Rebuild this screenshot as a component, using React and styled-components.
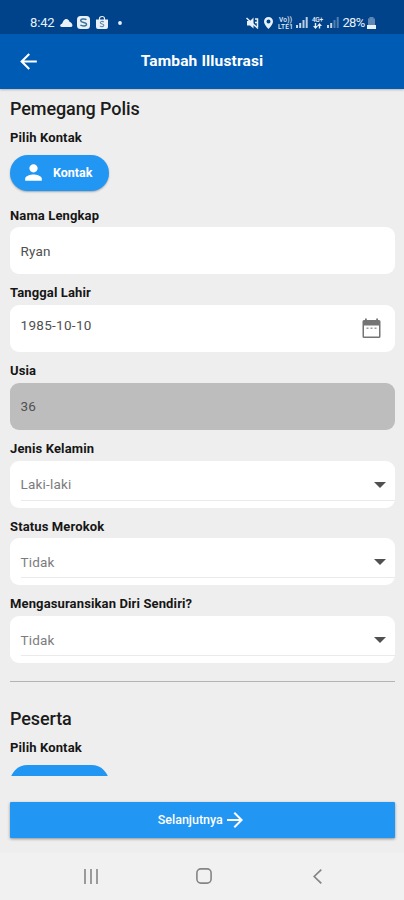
import React from "react";
import styled, { createGlobalStyle } from "styled-components";
import { MdArrowBack, MdArrowForward, MdPerson } from "react-icons/md";

const GlobalStyle = createGlobalStyle`
  * {
    box-sizing: border-box;
  }

  body {
    margin: 0;
    background: #eeeeee;
    font-family: Roboto, "Liberation Sans", sans-serif;
  }
`;

const Screen = styled.div`
  display: flex;
  flex-direction: column;
  width: 404px;
  height: 900px;
  overflow: hidden;
  background: #eeeeee;
`;

const StatusBar = styled.div`
  display: flex;
  flex: none;
  justify-content: space-between;
  align-items: center;
  height: 34px;
  padding: 11px 28px 0 30px;
  background: #00438a;
  color: #e8f0f8;
`;

const StatusGroup = styled.div`
  display: flex;
  align-items: center;
  height: 16px;
`;

const StatusText = styled.span`
  margin-left: ${({ $gap }) => $gap || 0}px;
  font-size: 13px;
  line-height: 16px;
  letter-spacing: ${({ $spacing }) => $spacing || 0}px;
`;

const StatusIcon = styled.svg`
  display: block;
  flex: none;
  margin-left: ${({ $gap }) => $gap || 0}px;
  overflow: visible;
`;

const AppBar = styled.header`
  position: relative;
  z-index: 1;
  display: grid;
  flex: none;
  grid-template-columns: 56px 1fr 56px;
  align-items: center;
  height: 54.5px;
  background: #005bb5;
  box-shadow: 0 1px 2px rgba(0, 0, 0, 0.25);
  color: #ffffff;
`;

const BackButton = styled.button`
  display: flex;
  justify-content: center;
  padding: 0;
  border: 0;
  background: none;
  color: inherit;
  font-size: 25px;
`;

const Title = styled.h1`
  margin: 0;
  font-size: 15.5px;
  font-weight: 700;
  line-height: 20px;
  letter-spacing: 0.15px;
  text-align: center;
  white-space: nowrap;
`;

const Content = styled.main`
  flex: none;
  height: 687.5px;
  padding: 9.5px 9.5px 0 10px;
  overflow: hidden;
`;

const Heading = styled.h2`
  margin: 0;
  color: #1b1b1b;
  font-size: 18px;
  font-weight: 500;
  line-height: 22px;
  letter-spacing: -0.1px;
`;

const Label = styled.div`
  height: 16px;
  color: #161616;
  font-size: 13px;
  font-weight: 700;
  line-height: 16px;
  letter-spacing: 0.13px;
  white-space: nowrap;
`;

const Section = styled.section`
  ${Heading} + ${Label} {
    margin-top: 10px;
  }
`;

const ContactButton = styled.button`
  display: flex;
  align-items: center;
  gap: 7px;
  width: 98.5px;
  height: 35.5px;
  margin: 9px 0 17px;
  padding: 0 0 0 11px;
  border: 0;
  border-radius: 18px;
  background: #2196f3;
  box-shadow: ${({ $cut }) => ($cut ? "none" : "0 1px 2px rgba(0, 0, 0, 0.3)")};
  color: #ffffff;
  font-family: inherit;
  font-size: 12.5px;
  font-weight: 700;

  svg {
    font-size: 25px;
  }
`;

const Field = styled.div`
  height: 77.8px;
`;

const FieldBox = styled.div`
  display: flex;
  justify-content: space-between;
  height: 47px;
  margin-top: 3.8px;
  padding: 0 10px 0 10.5px;
  border-radius: 9px;
  background: ${({ $disabled }) => ($disabled ? "#bdbdbd" : "#ffffff")};
`;

const Value = styled.span`
  margin-top: ${({ $top }) => $top || 15.5}px;
  color: ${({ $muted }) => ($muted ? "#7c7c7c" : "#505050")};
  font-size: 13.5px;
  line-height: 16px;
  letter-spacing: ${({ $spacing }) => $spacing || 0.2}px;
`;

const CalendarIcon = styled.svg`
  display: block;
  margin: 13px 4px 0 0;
`;

const Select = styled.div`
  display: flex;
  flex: 1;
  justify-content: space-between;
  height: 40px;
  margin-right: -10px;
  padding-right: 9px;
  border-bottom: 1px solid #eaeaea;
`;

const Caret = styled.span`
  width: 0;
  height: 0;
  margin-top: 21px;
  border: 6px solid transparent;
  border-top-color: #505050;
  border-bottom: 0;
`;

const Divider = styled.hr`
  height: 1px;
  margin: 6.7px 0 26px;
  border: 0;
  background: #b4b4b4;
`;

const NextButton = styled.button`
  display: flex;
  flex: none;
  justify-content: center;
  align-items: center;
  height: 35.5px;
  margin: 26px 9.5px 0 10px;
  padding: 0;
  border: 0;
  border-radius: 1px;
  background: #2196f3;
  box-shadow: 0 1px 3px rgba(0, 0, 0, 0.4);
  color: #ffffff;
  font-family: inherit;
  font-size: 12.5px;
  font-weight: 500;

  svg {
    font-size: 24px;
  }
`;

const NavBar = styled.nav`
  display: grid;
  flex: 1;
  grid-template-columns: repeat(3, 113.5px);
  justify-content: center;
  align-items: center;
  justify-items: center;
  margin-top: 15px;
  padding-left: 4px;
  background: #f1f1f1;
`;

const SignalIcon = ({ gap, weak }) => (
  <StatusIcon $gap={gap} width="12" height="11" viewBox="0 0 12 11" fill="currentColor">
    <path d="M0 8h2v3H0zM3.200 6h2v5h-2z" opacity="0.85" />
    <path d="M6.500 3h2v8h-2zM9.700 0h2v11h-2z" opacity={weak ? 0.35 : 0.8} />
  </StatusIcon>
);

const Status = () => (
  <StatusBar>
    <StatusGroup>
      <StatusText $spacing={-0.15}>8:42</StatusText>
      <StatusIcon $gap={5.5} width="13" height="8" viewBox="0 0 13 8" fill="currentColor">
        <path d="M1.800 8C-.5 8-.3 5.200 2 4.800 3 2.700 4 0 6.300 0c2 0 2.700 1.600 3.200 2.800C12.500 3.800 13.600 8 11 8z" />
      </StatusIcon>
      <StatusIcon $gap={4.5} width="13" height="13" viewBox="0 0 13 13">
        <rect width="13" height="13" rx="3.500" fill="currentColor" />
        <path d="M9.500 3.700C8 2.500 3.500 2.500 3.700 4.800c.2 2.200 5.800 1.200 5.800 3.400 0 2.300-4.500 2-6.100.8" fill="none" stroke="#397399" strokeWidth="1.500" />
      </StatusIcon>
      <StatusIcon $gap={5.5} width="12" height="13" viewBox="0 0 12 13">
        <path d="M3.500 4V2.500a2.500 2 0 0 1 5 0V4" fill="none" stroke="currentColor" strokeWidth="1.200" />
        <path d="M0 3.500h12V11q0 2-2 2H2q-2 0-2-2z" fill="currentColor" />
        <path d="M7.800 6C6.500 5 4.200 5.200 4.300 6.800c.1 1.500 3.500 1 3.500 2.500 0 1.700-2.500 1.700-3.800.7" fill="none" stroke="#5f86ac" strokeWidth="1.100" />
      </StatusIcon>
      <StatusIcon $gap={10} width="4" height="4" viewBox="0 0 4 4" fill="currentColor">
        <circle cx="2" cy="2" r="1.900" />
      </StatusIcon>
    </StatusGroup>
    <StatusGroup>
      <StatusIcon width="13" height="12" viewBox="0 0 13 12">
        <path d="M1 4h3l3.500-3.500v11L4 8.500H1z" fill="currentColor" />
        <path d="M.5 1l11.500 10.500M9 2h2.500v8M9 5.500h2" fill="none" stroke="currentColor" strokeWidth="1.500" />
      </StatusIcon>
      <StatusIcon $gap={5} width="9" height="12" viewBox="0 0 9 12" fill="currentColor">
        <path fillRule="evenodd" d="M4.500 0A4.500 4.500 0 0 0 0 4.500C0 7.500 4.500 12 4.500 12S9 7.500 9 4.500A4.500 4.500 0 0 0 4.500 0zm0 2.500a2 2 0 1 1 0 4 2 2 0 0 1 0-4z" />
      </StatusIcon>
      <StatusIcon $gap={5.5} width="15" height="13" viewBox="0 0 15 13" fill="currentColor" fontSize="6.500" fontWeight="500">
        <text x="1" y="6" textLength="13">Vo))</text>
        <text x="0" y="12.500" textLength="15">LTE1</text>
      </StatusIcon>
      <SignalIcon gap={2.5} />
      <StatusIcon $gap={4} width="11" height="13" viewBox="0 0 11 13" fill="currentColor" fontSize="6.500" fontWeight="500">
        <text x="0" y="6" textLength="11">4G+</text>
        <path d="M3.500 13L1 10h1.800V7h1.400v3H6zM7.500 7L10 10H8.200v2.500H6.800V10H5z" />
      </StatusIcon>
      <SignalIcon gap={4} weak />
      <StatusText $gap={3.5} $spacing={-0.7}>
        28%
      </StatusText>
      <StatusIcon $gap={2.5} width="9" height="12" viewBox="0 0 9 12" fill="currentColor">
        <path d="M2.500 0h4v1.500H8V8H1V1.500h1.500z" opacity="0.4" />
        <path d="M0 8h9v4H0z" />
      </StatusIcon>
    </StatusGroup>
  </StatusBar>
);

const SelectField = ({ label, value }) => (
  <Field>
    <Label>{label}</Label>
    <FieldBox>
      <Select>
        <Value $muted>{value}</Value>
        <Caret />
      </Select>
    </FieldBox>
  </Field>
);

const App = () => (
  <>
    <GlobalStyle />
    <Screen>
      <Status />
      <AppBar>
        <BackButton aria-label="Kembali">
          <MdArrowBack />
        </BackButton>
        <Title>Tambah Illustrasi</Title>
      </AppBar>
      <Content>
        <Section>
          <Heading>Pemegang Polis</Heading>
          <Label>Pilih Kontak</Label>
          <ContactButton>
            <MdPerson />
            Kontak
          </ContactButton>
          <Field>
            <Label>Nama Lengkap</Label>
            <FieldBox>
              <Value>Ryan</Value>
            </FieldBox>
          </Field>
          <Field>
            <Label>Tanggal Lahir</Label>
            <FieldBox>
              <Value $top={12} $spacing={0.3}>
                1985-10-10
              </Value>
              <CalendarIcon width="19" height="21" viewBox="0 0 19 21" fill="#757575">
                <path fillRule="evenodd" d="M3 .5h1.800V2h9.400V.5H16V2h1q1.500 0 1.500 1.500v15Q18.500 20 17 20H2Q.5 20 .5 18.500v-15Q.5 2 2 2h1zM2 7.500v11h15v-11z" />
                <path d="M4.500 9.500h2V11h-2zM8.500 9.500h2V11h-2zM12.500 9.500h2V11h-2z" opacity="0.7" />
              </CalendarIcon>
            </FieldBox>
          </Field>
          <Field>
            <Label>Usia</Label>
            <FieldBox $disabled>
              <Value>36</Value>
            </FieldBox>
          </Field>
          <SelectField label="Jenis Kelamin" value="Laki-laki" />
          <SelectField label="Status Merokok" value="Tidak" />
          <SelectField label="Mengasuransikan Diri Sendiri?" value="Tidak" />
        </Section>
        <Divider />
        <Section>
          <Heading>Peserta</Heading>
          <Label>Pilih Kontak</Label>
          {/* only the top edge shows above the footer */}
          <ContactButton $cut aria-label="Kontak" />
        </Section>
      </Content>
      <NextButton>
        Selanjutnya
        <MdArrowForward />
      </NextButton>
      <NavBar>
        <svg width="16" height="15" viewBox="0 0 16 15" stroke="#8c8c8c" strokeWidth="1.700">
          <path d="M2 0v15M8 0v15M14 0v15" />
        </svg>
        <svg width="16" height="16" viewBox="0 0 16 16" fill="none" stroke="#858585" strokeWidth="1.600">
          <rect x="0.900" y="0.900" width="14.200" height="14.200" rx="4" />
        </svg>
        <svg width="9" height="15" viewBox="0 0 9 15" fill="none" stroke="#858585" strokeWidth="1.700">
          <path d="M8.300.6L1.200 7.500l7.100 6.900" />
        </svg>
      </NavBar>
    </Screen>
  </>
);

export default App;
